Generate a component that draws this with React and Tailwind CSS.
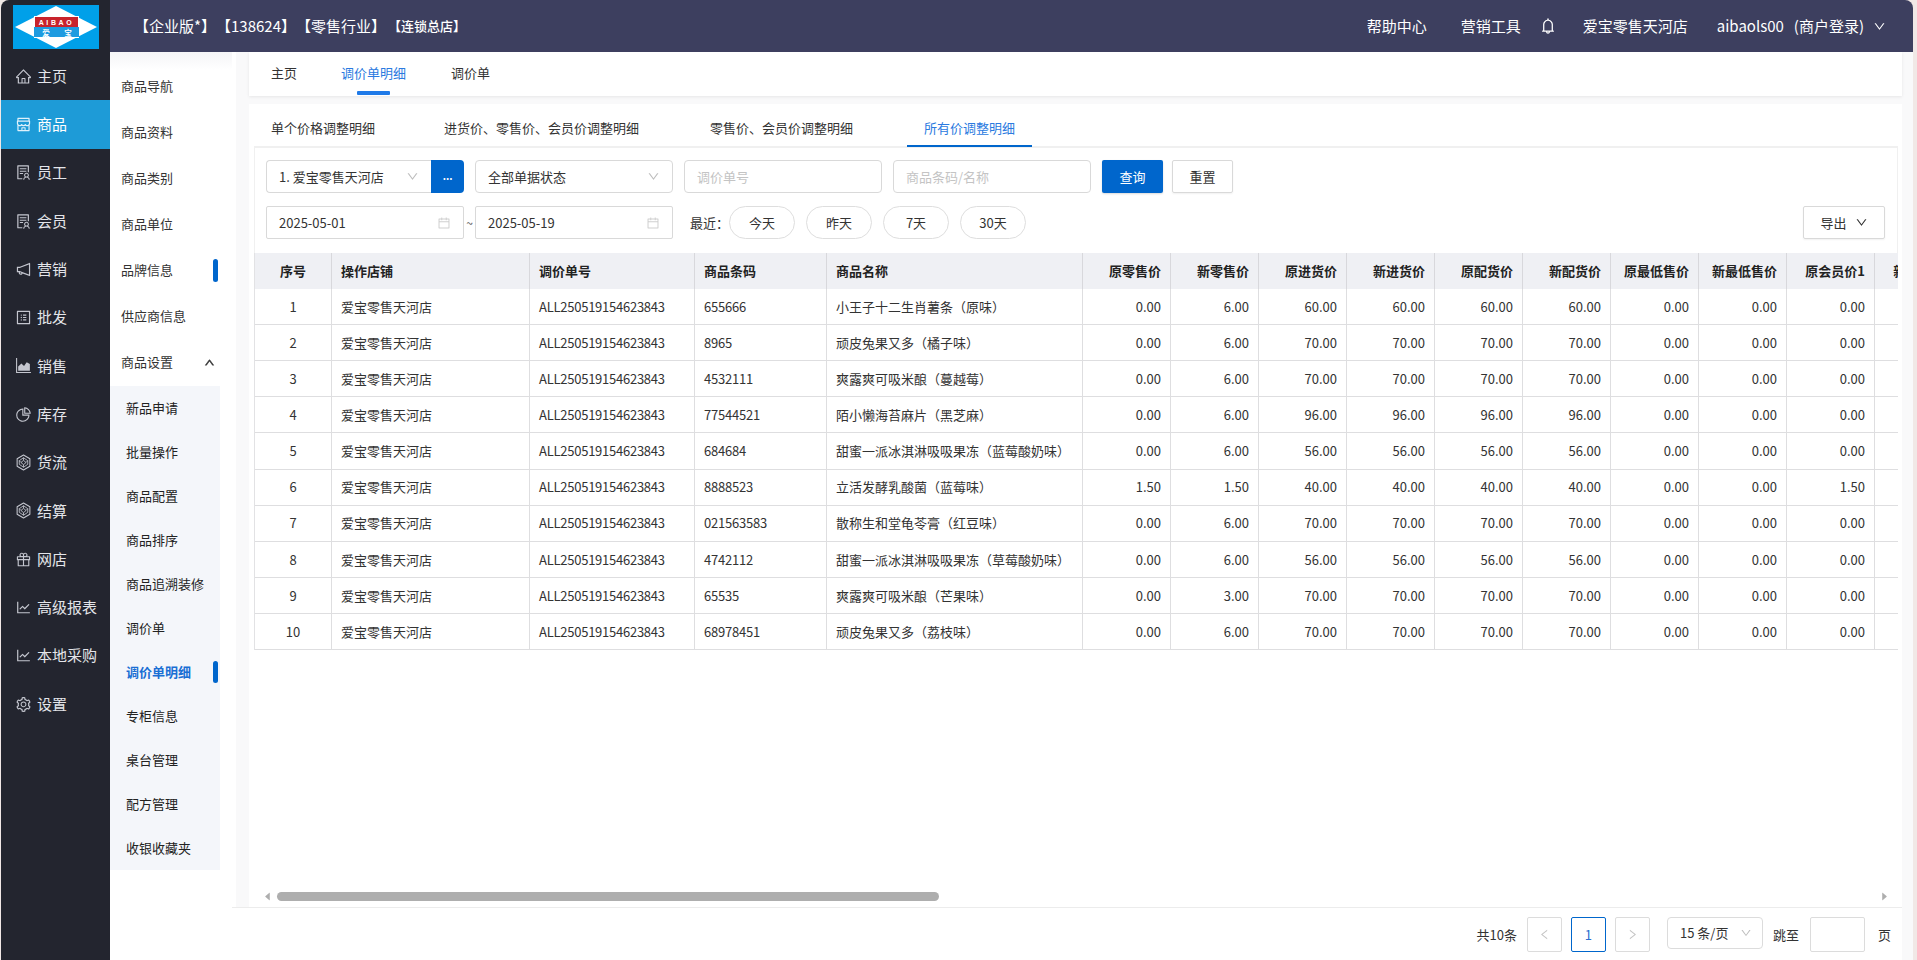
import React from "react";
import {
  AiOutlineHome, AiOutlineShop, AiOutlineSolution, AiOutlineNotification, AiOutlineProfile,
  AiOutlinePieChart, AiOutlineGift, AiOutlineLineChart,
  AiOutlineSetting, AiOutlineBell, AiOutlineCalendar, AiOutlineDown, AiOutlineLeft, AiOutlineRight,
  AiOutlineUp, AiFillCaretLeft, AiFillCaretRight,
} from "react-icons/ai";

function AreaFill({ className }) {
  return (
    <svg viewBox="0 0 16 16" width="1em" height="1em" className={className} fill="currentColor">
      <path d="M1 1h1v13h13v1H1z" />
      <path d="M3 13V9l3-3 2.5 2.5L11 5l3 1.5V13z" />
    </svg>
  );
}
function Cube({ className }) {
  return (
    <svg viewBox="0 0 16 16" width="1em" height="1em" className={className} fill="none" stroke="currentColor" strokeWidth="1">
      <path d="M8 1l6 3.5v7L8 15l-6-3.5v-7z" strokeLinejoin="round" />
      <path d="M8 3.5l4 2.8v3.4l-4 2.8-4-2.8V6.3z" strokeWidth="0.8" />
      <path d="M8 6l2.4 2L8 10 5.6 8zM8 3.5V6M8 10v2.5M4 6.3L5.6 8M12 6.3L10.4 8" strokeWidth="0.8" />
    </svg>
  );
}

const nav = [
  ["主页", AiOutlineHome], ["商品", AiOutlineShop], ["员工", AiOutlineSolution], ["会员", AiOutlineSolution],
  ["营销", AiOutlineNotification], ["批发", AiOutlineProfile], ["销售", AreaFill], ["库存", AiOutlinePieChart],
  ["货流", Cube], ["结算", Cube], ["网店", AiOutlineGift],
  ["高级报表", AiOutlineLineChart], ["本地采购", AiOutlineLineChart], ["设置", AiOutlineSetting],
];
const menu = ["商品导航", "商品资料", "商品类别", "商品单位", "品牌信息", "供应商信息"];
const sub = ["新品申请", "批量操作", "商品配置", "商品排序", "商品追溯装修", "调价单", "调价单明细", "专柜信息", "桌台管理", "配方管理", "收银收藏夹"];
const heads = ["原零售价", "新零售价", "原进货价", "新进货价", "原配货价", "新配货价", "原最低售价", "新最低售价", "原会员价1", "新会员价1"];
const rows = [
  ["655666", "小王子十二生肖薯条（原味）", "0.00", "6.00", "60.00", "0.00"],
  ["8965", "顽皮兔果又多（橘子味）", "0.00", "6.00", "70.00", "0.00"],
  ["4532111", "爽露爽可吸米酿（蔓越莓）", "0.00", "6.00", "70.00", "0.00"],
  ["77544521", "陌小懒海苔麻片（黑芝麻）", "0.00", "6.00", "96.00", "0.00"],
  ["684684", "甜蜜一派冰淇淋吸吸果冻（蓝莓酸奶味）", "0.00", "6.00", "56.00", "0.00"],
  ["8888523", "立活发酵乳酸菌（蓝莓味）", "1.50", "1.50", "40.00", "1.50"],
  ["021563583", "散称生和堂龟苓膏（红豆味）", "0.00", "6.00", "70.00", "0.00"],
  ["4742112", "甜蜜一派冰淇淋吸吸果冻（草莓酸奶味）", "0.00", "6.00", "56.00", "0.00"],
  ["65535", "爽露爽可吸米酿（芒果味）", "0.00", "3.00", "70.00", "0.00"],
  ["68978451", "顽皮兔果又多（荔枝味）", "0.00", "6.00", "70.00", "0.00"],
];

function Logo() {
  return (
    <svg width="86" height="44" viewBox="0 0 86 44" className="block">
      <rect width="86" height="44" fill="#00a0e9" />
      <polygon points="2,22 43,1 84,22 43,43" fill="#fff" />
      <rect x="21" y="11" width="45" height="22" fill="#fff" />
      <rect x="22" y="12" width="43" height="10" fill="#c8232c" />
      <rect x="21" y="22" width="45" height="10" fill="#1e9be0" />
      <text x="43.5" y="20" textAnchor="middle" fontSize="7" fontWeight="700" letterSpacing="2.6" fill="#fff" fontFamily="Liberation Sans, sans-serif">AIBAO</text>
      <text x="33" y="30.5" textAnchor="middle" fontSize="7.5" fontWeight="700" fill="#fff" fontFamily="Noto Sans CJK SC, sans-serif">爱</text>
      <text x="55" y="30.5" textAnchor="middle" fontSize="7.5" fontWeight="700" fill="#fff" fontFamily="Noto Sans CJK SC, sans-serif">宝</text>
    </svg>
  );
}

function Select({ text, w = "w-[198px]" }) {
  return (
    <div className={`${w} h-[33px] border border-[#d9d9d9] rounded-[4px] flex items-center justify-between pl-[12px] pr-[12px] text-[13px] text-[#333]`}>
      <span>{text}</span>
      <AiOutlineDown className="text-[#bdbdbd] text-[13px]" />
    </div>
  );
}
function Input({ text }) {
  return <div className="w-[198px] h-[33px] border border-[#d9d9d9] rounded-[4px] flex items-center pl-[12px] text-[13px] text-[#c4c4c4]">{text}</div>;
}
function DateBox({ text }) {
  return (
    <div className="w-[198px] h-[33px] border border-[#d9d9d9] rounded-[2px] flex items-center justify-between pl-[12px] pr-[12px] text-[13px] text-[#333]">
      <span>{text}</span>
      <AiOutlineCalendar className="text-[#cfcfcf] text-[14px]" />
    </div>
  );
}
function Pill({ text }) {
  return <div className="w-[66px] h-[33px] border border-[#dedede] rounded-full flex items-center justify-center text-[13px] text-[#333]">{text}</div>;
}

export default function App() {
  return (
    <div className="w-[1917px] h-[960px] bg-[#f1e8e6] pl-px pr-[4px] overflow-hidden" style={{ fontFamily: '"Noto Sans CJK SC", "Noto Sans", sans-serif' }}>
      <div className="h-full flex rounded-t-[8px] overflow-hidden">
        {/* dark rail */}
        <aside className="w-[109px] shrink-0 bg-[#23252f] flex flex-col">
          <div className="h-[52px] pl-[12px] pt-[5px]"><Logo /></div>
          {nav.map(([t, I], i) => (
            <div key={t} className={`h-[48.3px] flex items-center pl-[14px] gap-[5px] text-[15px] ${i === 1 ? "bg-[#1e9bd7] text-white" : "text-[#e4e5ea]"}`}>
              <I className={`text-[17px] shrink-0 ${i === 1 ? "text-[#dff1fb]" : "text-[#c4c6cf]"}`} />
              <span className="whitespace-nowrap">{t}</span>
            </div>
          ))}
        </aside>

        <div className="flex-1 flex flex-col min-w-0">
          {/* header */}
          <header className="h-[52px] shrink-0 bg-[#3d3f5f] text-white flex items-center text-[15px] relative z-10">
            <div className="flex items-center ml-[24px]">
              <span>【企业版*】</span>
              <span>【138624】</span>
              <span>【零售行业】</span>
              <span className="ml-[2px] text-[13px] font-medium">【连锁总店】</span>
            </div>
            <div className="ml-auto flex items-center mr-[27px]">
              <span>帮助中心</span>
              <span className="ml-[34px]">营销工具</span>
              <AiOutlineBell className="ml-[18px] text-[18px]" />
              <span className="ml-[26px]">爱宝零售天河店</span>
              <span className="ml-[29px] flex gap-[10px]"><span>aibaols00</span><span>(商户登录)</span></span>
              <AiOutlineDown className="ml-[9px] text-[13px]" />
            </div>
          </header>

          <div className="flex-1 flex min-h-0 bg-[#f9f9fa]">
            {/* second menu */}
            <nav className="w-[122px] shrink-0 bg-white bg-linear-to-b from-[#f5f5f7] to-white to-[18px] pt-[11px] text-[13px] text-[#333]">
              <div className="w-[110px]">
                {menu.map((t) => (
                  <div key={t} className="h-[46px] flex items-center justify-between pl-[11px] pr-[2px]">
                    <span>{t}</span>
                    {t === "品牌信息" && <span className="w-[5px] h-[23px] rounded-[3px] bg-[#0066cc]" />}
                  </div>
                ))}
                <div className="h-[46px] flex items-center justify-between pl-[11px] pr-[5px]">
                  <span>商品设置</span>
                  <AiOutlineUp className="text-[11px] stroke-[60]" />
                </div>
                <div className="mt-px bg-[#f4f6fa]">
                  {sub.map((t) => (
                    <div key={t} className={`h-[44px] flex items-center justify-between pl-[16px] pr-[2px] ${t === "调价单明细" ? "text-[#1a6fd4] font-bold" : "text-[#222]"}`}>
                      <span>{t}</span>
                      {t === "调价单明细" && <span className="w-[5px] h-[22px] rounded-[3px] bg-[#0066cc]" />}
                    </div>
                  ))}
                </div>
              </div>
            </nav>

            {/* main */}
            <main className="w-[1670px] shrink-0 flex flex-col">
              <div className="h-[855px] shrink-0 border-l-[4px] border-white pl-[13px] flex flex-col bg-[#f9f9fa]">
                <div className="h-[44px] shrink-0 bg-white shadow-[0_1px_3px_rgba(0,0,0,0.08)] flex text-[13px] text-[#333] pl-[22px]">
                  <span className="pt-[12px] leading-[18px]">主页</span>
                  <div className="ml-[44px] pt-[12px] flex flex-col items-center">
                    <span className="leading-[18px] text-[#2b7ae0]">调价单明细</span>
                    <span className="mt-[9px] w-[33px] h-[4px] rounded-[1px] bg-[#1f7ae8]" />
                  </div>
                  <span className="ml-[45px] pt-[12px] leading-[18px]">调价单</span>
                </div>

                <div className="mt-[8px] flex-1 min-h-0 bg-white flex flex-col">
                  <div className="h-[42px] shrink-0 flex pl-[5px] gap-[37px] text-[13px] text-[#333]">
                    <div className="px-[17px] pt-[15px] leading-[18px] -mr-[2px]">单个价格调整明细</div>
                    <div className="px-[17px] pt-[15px] leading-[18px]">进货价、零售价、会员价调整明细</div>
                    <div className="px-[17px] pt-[15px] leading-[18px]">零售价、会员价调整明细</div>
                    <div className="px-[17px] pt-[15px] leading-[18px] text-[#2b7ae0] border-b-[2px] border-[#0066cc] h-[43px] relative z-[1]">所有价调整明细</div>
                  </div>
                  <div className="flex-1 min-h-0 ml-[5px] mr-[4px] border-t-[2px] border-[#f0f0f0] flex flex-col overflow-hidden">
                    <div className="border-x border-[#f0f0f0] pl-[11px] pr-[11px] pt-[12px] pb-[14px] shrink-0">
                      <div className="flex gap-[11px]">
                        <div className="flex">
                          <div className="w-[165px] h-[33px] border border-r-0 border-[#d9d9d9] rounded-l-[4px] flex items-center justify-between pl-[12px] pr-[12px] text-[13px] text-[#333]">
                            <span>1. 爱宝零售天河店</span>
                            <AiOutlineDown className="text-[#bdbdbd] text-[13px]" />
                          </div>
                          <div className="w-[33px] h-[33px] bg-[#0066cc] rounded-r-[4px] text-white flex items-center justify-center text-[10px] font-bold leading-none pb-[2px]">...</div>
                        </div>
                        <Select text="全部单据状态" />
                        <Input text="调价单号" />
                        <Input text="商品条码/名称" />
                        <div className="w-[61px] h-[33px] bg-[#0066cc] rounded-[2px] text-white flex items-center justify-center text-[13px] shadow-[0_1px_2px_rgba(0,0,0,0.15)]">查询</div>
                        <div className="w-[61px] h-[33px] -ml-[2px] border border-[#d9d9d9] rounded-[2px] text-[#333] flex items-center justify-center text-[13px] shadow-[0_1px_2px_rgba(0,0,0,0.06)]">重置</div>
                      </div>
                      <div className="flex items-center mt-[13px]">
                        <DateBox text="2025-05-01" />
                        <span className="w-[11px] text-center text-[12px] text-[#555]">~</span>
                        <DateBox text="2025-05-19" />
                        <span className="ml-[17px] w-[39px] text-[13px] text-[#333]">最近：</span>
                        <div className="flex gap-[11px]">
                          <Pill text="今天" /><Pill text="昨天" /><Pill text="7天" /><Pill text="30天" />
                        </div>
                        <div className="ml-auto mr-px w-[82px] h-[33px] border border-[#d9d9d9] rounded-[2px] flex items-center justify-center gap-[8px] text-[13px] text-[#333] shadow-[0_1px_2px_rgba(0,0,0,0.06)]">
                          <span>导出</span><AiOutlineDown className="text-[13px]" />
                        </div>
                      </div>
                    </div>

                    <div className="flex-1 min-h-0 overflow-hidden">
                      <div className="border-l border-[#e2e2e4] overflow-hidden">
                        <table className="table-fixed border-separate border-spacing-0 w-[1708px] text-[13px] text-[#333]">
                          <colgroup>
                            <col className="w-[77px]" /><col className="w-[198px]" /><col className="w-[165px]" /><col className="w-[132px]" /><col className="w-[256px]" />
                            {heads.map((h) => <col key={h} className="w-[88px]" />)}
                          </colgroup>
                          <thead>
                            <tr className="h-[36px] bg-[#eff0f4] font-bold text-[#222]">
                              <th className="border-r border-[#d8d8dc] text-center font-bold">序号</th>
                              {["操作店铺", "调价单号", "商品条码", "商品名称"].map((h) => (
                                <th key={h} className="border-r border-[#d8d8dc] text-left pl-[9px] font-bold">{h}</th>
                              ))}
                              {heads.map((h) => (
                                <th key={h} className="border-r border-[#d8d8dc] text-right pr-[9px] font-bold whitespace-nowrap">{h}</th>
                              ))}
                            </tr>
                          </thead>
                          <tbody>
                            {rows.map((r, i) => (
                              <tr key={i} className="h-[36.11px]">
                                <td className="border-r border-b border-[#dedee0] text-center">{i + 1}</td>
                                <td className="border-r border-b border-[#dedee0] pl-[9px]">爱宝零售天河店</td>
                                <td className="border-r border-b border-[#dedee0] pl-[9px] tracking-[-0.25px]">ALL250519154623843</td>
                                <td className="border-r border-b border-[#dedee0] pl-[9px] tracking-[-0.2px]">{r[0]}</td>
                                <td className="border-r border-b border-[#dedee0] pl-[9px] whitespace-nowrap">{r[1]}</td>
                                {[r[2], r[3], r[4], r[4], r[4], r[4], "0.00", "0.00", r[5]].map((v, j) => (
                                  <td key={j} className="border-r border-b border-[#dedee0] text-right pr-[9px]">{v}</td>
                                ))}
                                <td className="border-b border-[#dedee0]" />
                              </tr>
                            ))}
                          </tbody>
                        </table>
                      </div>
                    </div>

                    <div className="h-[17px] shrink-0 flex items-start pt-[2px] text-[#aeaeae]">
                      <AiFillCaretLeft className="ml-[8px] mt-[-1px] text-[11px]" />
                      <div className="ml-[4px] w-[662px] h-[9px] rounded-full bg-[#aeaeae]" />
                      <AiFillCaretRight className="ml-auto mr-[8px] mt-[-1px] text-[11px]" />
                    </div>
                  </div>
                </div>
              </div>

              {/* pagination */}
              <div className="flex-1 bg-white border-t border-[#ececec] flex items-start justify-end pt-[9px] pr-[11px] text-[13px] text-[#333]">
                <span className="h-[35px] flex items-center mr-[10px]">共10条</span>
                <div className="w-[35px] h-[35px] border border-[#dcdcdc] rounded-[2px] flex items-center justify-center text-[#c4c4c4]"><AiOutlineLeft className="text-[13px]" /></div>
                <div className="ml-[9px] w-[35px] h-[35px] border border-[#0066cc] rounded-[2px] flex items-center justify-center text-[#2b6fd0]">1</div>
                <div className="ml-[9px] w-[35px] h-[35px] border border-[#dcdcdc] rounded-[2px] flex items-center justify-center text-[#c4c4c4]"><AiOutlineRight className="text-[13px]" /></div>
                <div className="ml-[17px] w-[96px] h-[32px] border border-[#dcdcdc] rounded-[4px] flex items-center justify-between pl-[12px] pr-[10px]">
                  <span>15 条/页</span><AiOutlineDown className="text-[12px] text-[#bdbdbd]" />
                </div>
                <span className="ml-[10px] h-[35px] flex items-center">跳至</span>
                <div className="ml-[11px] w-[55px] h-[35px] border border-[#dcdcdc] rounded-[2px]" />
                <span className="ml-[13px] h-[35px] flex items-center">页</span>
              </div>
            </main>
            <div className="flex-1" />
          </div>
        </div>
      </div>
    </div>
  );
}
